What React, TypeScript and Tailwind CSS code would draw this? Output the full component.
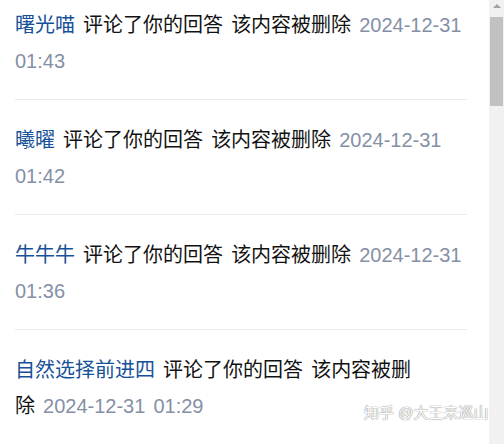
const items = [
  { name: '曙光喵', time: '2024-12-31 01:43' },
  { name: '曦曜', time: '2024-12-31 01:42' },
  { name: '牛牛牛', time: '2024-12-31 01:36' },
  { name: '自然选择前进四', time: '2024-12-31 01:29', keepTail: true },
];

function Notice({ name, time, first, keepTail }: { name: string; time: string; first?: boolean; keepTail?: boolean }) {
  const [day, clock] = time.split(' ');
  return (
    <div className={first ? 'pt-[7px] pb-[20px] border-b border-[#ebebeb]' : 'pt-[22px] pb-[20px] border-b border-[#ebebeb]'}>
      <p className="text-[20px] leading-[36px] text-[#121212] [word-spacing:2.5px]">
        <span className="text-[#175199]">{name}</span> 评论了你的回答{' '}
        {keepTail ? (
          <>
            该内容被删
            <span className="whitespace-nowrap">
              除 <span className="text-[#8590a6]">{day}</span>
            </span>
          </>
        ) : (
          <>
            该内容被删除 <span className="text-[#8590a6]">{day}</span>
          </>
        )}{' '}
        <span className="text-[#8590a6]">{clock}</span>
      </p>
    </div>
  );
}

export default function App() {
  return (
    <div
      className="relative flex h-[444px] w-[504px] overflow-hidden bg-white"
      style={{ fontFamily: '"Liberation Sans", "Noto Sans CJK SC", sans-serif' }}
    >
      <div className="w-[489px] pl-[15px] pr-[22px]">
        {items.map((it, i) => (
          <Notice key={it.name} name={it.name} time={it.time} first={i === 0} keepTail={it.keepTail} />
        ))}
      </div>

      {/* scrollbar */}
      <div className="flex w-[15px] flex-col bg-[#f1f1f1]">
        <div className="flex h-[17px] items-start justify-center pt-[4px]">
          <div className="h-0 w-0 border-x-[4px] border-b-[4px] border-x-transparent border-b-[#a3a3a3]" />
        </div>
        <div className="mx-[1px] h-[89px] bg-[#c1c1c1]" />
      </div>

      <div className="absolute left-[364px] top-[402px] text-[15px] text-white [text-shadow:0_0_1px_#888,0_0_1px_#888]">
        知乎 @大王来巡山
      </div>
    </div>
  );
}
